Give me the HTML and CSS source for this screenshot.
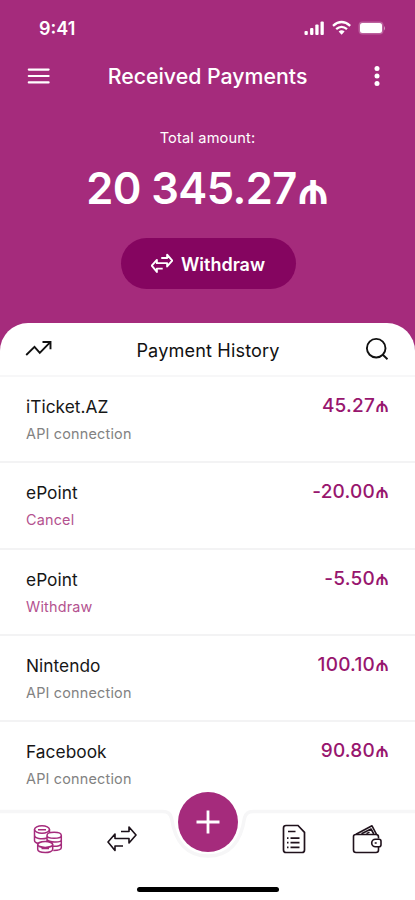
FILE: index.html
```html
<!DOCTYPE html>
<html lang="en">
<head>
<meta charset="utf-8">
<title>Received Payments</title>
<link rel="stylesheet" href="styles.css">
</head>
<body>
<div class="app">
  <header class="hero">
    <div class="status">
      <span class="time">9:41</span>
      <svg width="84" height="18" viewBox="0 0 84 18" fill="#fff">
        <rect x="3.500" y="12" width="3.300" height="4" rx="1"/><rect x="9.100" y="9" width="3.300" height="7" rx="1"/><rect x="14.300" y="5.500" width="3.300" height="10.500" rx="1"/><rect x="19.500" y="2.500" width="3.300" height="13.500" rx="1"/>
        <g fill="none" stroke="#fff" stroke-width="2.300"><path d="M32 6.800Q40.600 -.8 49.200 6.800"/><path d="M35.200 10.200Q40.600 5.600 46 10.200"/></g>
        <path d="M37.600 12.500Q40.600 10 43.600 12.500L40.600 15.700Z"/>
        <rect x="57.500" y="2.500" width="25" height="13" rx="4" opacity=".25"/><rect x="59" y="4" width="22" height="10" rx="2.500"/><path d="M83 7v4.500q1-.8 1-2.250T83 7z" opacity=".5"/>
      </svg>
    </div>
    <div class="topbar">
      <svg width="24" height="20" viewBox="0 0 24 20" stroke="#fff" stroke-width="2.200" stroke-linecap="round"><path d="M2.800 3.600h19.800M2.800 10h19.800M2.800 16.400h19.800"/></svg>
      <h1>Received Payments</h1>
      <svg width="24" height="24" viewBox="0 0 24 24" fill="#fff"><circle cx="12" cy="4.500" r="2.500"/><circle cx="12" cy="12" r="2.500"/><circle cx="12" cy="19.500" r="2.500"/></svg>
    </div>
    <p class="label">Total amount:</p>
    <p class="total">20 345.27<span>₼</span></p>
    <button class="withdraw">
      <svg width="22" height="21" viewBox="0 0 30 28" fill="none" stroke="#fff" stroke-width="2.600" stroke-linejoin="round"><path d="M14 6.500h8V2l7 8-7 8v-4.500H8V9l-7 8 7 8.500V21h8"/></svg>
      <span>Withdraw</span>
    </button>
  </header>
  <main class="panel">
    <div class="panel-head">
      <svg width="28" height="20" viewBox="0 0 28 20" fill="none" stroke="#111" stroke-width="1.900"><path d="M1.200 16L9.500 7.800l5.300 6L25 3.400M17.500 3h8v7.300"/></svg>
      <h2>Payment History</h2>
      <svg width="24" height="24" viewBox="0 0 24 24" fill="none" stroke="#111" stroke-width="1.900"><circle cx="11.200" cy="11.200" r="9.300"/><path d="M17.800 17.800l4.700 4.500"/></svg>
    </div>
    <ul class="list">
      <li><div><h3>iTicket.AZ</h3><p>API connection</p></div><b>45.27<i>₼</i></b></li>
      <li><div><h3>ePoint</h3><p class="pink">Cancel</p></div><b>-20.00<i>₼</i></b></li>
      <li><div><h3>ePoint</h3><p class="pink">Withdraw</p></div><b>-5.50<i>₼</i></b></li>
      <li><div><h3>Nintendo</h3><p>API connection</p></div><b>100.10<i>₼</i></b></li>
      <li><div><h3>Facebook</h3><p>API connection</p></div><b>90.80<i>₼</i></b></li>
    </ul>
  </main>
  <nav class="nav">
    <svg class="nav-bg" width="415" height="92" viewBox="0 0 415 92"><path d="M-4 3.500H163Q170 3.500 171.500 10C175 34 187 48 208 48S241 34 244.500 10Q246 3.500 253 3.500H419V96H-4Z" fill="#fff" stroke="#f6f6f7" stroke-width="3.500"/></svg>
    <div class="tabs">
      <svg width="30" height="30" viewBox="0 0 30 30" fill="none" stroke="#a52b7c" stroke-width="1.500"><ellipse cx="9" cy="5.500" rx="7.500" ry="3.800"/><path d="M1.500 5.500v11c0 1.500 1.500 2.500 4 3M16.500 5.500v3.500M1.500 11c0 3.500 7 4.800 12.500 3M5 5.800h8"/><path d="M14 17.500V11.500c0-4.200 14.300-4.200 14.300 0v12c0 1.800-3 3-8 3M14 11.500c0 3.800 14.300 3.800 14.300 0M14 15.500c2 3.200 14 3.500 14.300.5M20 22.300c5 .2 8.300-.8 8.300-2.800"/><ellipse cx="12.200" cy="20.500" rx="7.500" ry="2.900"/><path d="M4.700 20.500v4.800c0 4.300 15 4.300 15 0v-4.800M8.500 24.500h7.500"/></svg>
      <svg width="30" height="28" viewBox="0 0 30 28" fill="none" stroke="#1b1119" stroke-width="1.600" stroke-linejoin="round"><path d="M14 6.500h8V2l7 8-7 8v-4.500H8V9l-7 8 7 8.500V21h8"/></svg>
      <button class="add"><svg width="26" height="26" viewBox="0 0 26 26" stroke="#fff" stroke-width="2.800"><path d="M13 1.500v23M1.500 13h23"/></svg></button>
      <svg width="24" height="30" viewBox="0 0 24 30" fill="none" stroke="#20121c" stroke-width="1.700"><path d="M4 1.500h12l6.500 6.800V26q0 2.500-2.500 2.500H4Q1.500 28.500 1.500 26V4Q1.500 1.500 4 1.500Z"/><path d="M6 7.500h7.500M8.500 14.200h9M8.500 18.700h9M8.500 23.300h9M5 14.200h1.500M5 18.700h1.500M5 23.300h1.500"/></svg>
      <svg width="30" height="30" viewBox="0 0 30 30" fill="none" stroke="#20121c" stroke-width="1.600" stroke-linejoin="round"><path d="M26.500 14.500V13q0-2.500-2.500-2.500H4Q1.500 10.500 1.500 12.500V26q0 2.500 2.500 2.500h20q2.500 0 2.500-2.500v-3"/><path d="M27 15.200H23.500a3.800 3.800 0 0 0 0 7.600H27q2 0 2-2v-3.600q0-2-2-2zM22.700 19h2M4 10.200L20 1.800l4.500 8.500M9.500 9.800L19 5l2.800 5M14.500 9.600l3-1.500"/></svg>
    </div>
    <div class="home"></div>
  </nav>
</div>
</body>
</html>
```
FILE: styles.css
```css
* { box-sizing: border-box; }
body, h1, h2, h3, p, ul { margin: 0; padding: 0; }
body { font-family: Inter, "Liberation Sans", sans-serif; background: #fff; }
button { border: 0; padding: 0; font: inherit; color: inherit; }
svg { display: block; flex: none; }
.app { width: 415px; height: 900px; overflow: hidden; display: flex; flex-direction: column; background: linear-gradient(#a52b7c 400px, #fff 400px); }
.hero { height: 323px; flex: none; color: #fff; display: flex; flex-direction: column; align-items: center; }
.status { width: 100%; height: 56px; padding: 0 30px 0 39px; display: flex; align-items: center; justify-content: space-between; }
.time { padding-top: 1px; font-size: 18px; font-weight: 600; line-height: 20px; }
.topbar { width: 100%; height: 40px; padding: 0 26px; display: flex; align-items: center; justify-content: space-between; }
.topbar h1 { font-size: 21.300px; font-weight: 500; line-height: 28px; white-space: nowrap; }
.label { margin-top: 33px; font-size: 14.600px; line-height: 18px; letter-spacing: .15px; }
.total { margin-top: 15px; height: 52px; line-height: 52px; font-size: 43.500px; letter-spacing: -.6px; font-weight: 600; white-space: nowrap; }
.withdraw { margin: 24px 0 0 1px; width: 175px; height: 51px; border-radius: 26px; background: #850560; display: flex; align-items: center; justify-content: center; gap: 8px; font-size: 18px; font-weight: 600; }
.withdraw span { padding-top: 2px; }
.panel { height: 487px; flex: none; background: #fff; border-radius: 28px 28px 0 0; overflow: hidden; }
.panel-head { height: 54px; padding: 0 26px 0 25px; display: flex; align-items: center; justify-content: space-between; border-bottom: 2px solid #f7f7f8; }
.panel-head h2 { padding: 1px 2px 0 0; font-size: 18.100px; font-weight: 400; color: #111; letter-spacing: .15px; }
.list { list-style: none; }
.list li { height: 86.300px; padding: 18px 26px 0; display: flex; justify-content: space-between; border-bottom: 2px solid #f3f3f4; }
.list li:last-child { border-bottom: 0; }
.list h3 { font-size: 17.300px; line-height: 24px; font-weight: 400; color: #161616; letter-spacing: .05px; }
.list p { margin-top: 5px; font-size: 14.400px; line-height: 20px; color: #828282; letter-spacing: .2px; }
.list p.pink { color: #b4528f; }
.list b { font-size: 19px; line-height: 22px; font-weight: 500; color: #98166e; letter-spacing: .2px; white-space: nowrap; }
.list i { font-style: normal; letter-spacing: 0; }
.nav { position: relative; flex: none; height: 92px; margin-top: -2px; }
.nav-bg { position: absolute; left: 0; top: 0; }
.tabs { position: relative; height: 62px; display: grid; grid-template-columns: 96px 52px 120px 51px 96px; align-items: center; justify-items: center; }
.add { width: 60px; height: 60px; margin-top: -34px; border-radius: 50%; background: #a52b7c; display: flex; align-items: center; justify-content: center; }
.home { position: relative; width: 142px; height: 5px; margin: 17px auto 0; border-radius: 3px; background: #000; }
```
